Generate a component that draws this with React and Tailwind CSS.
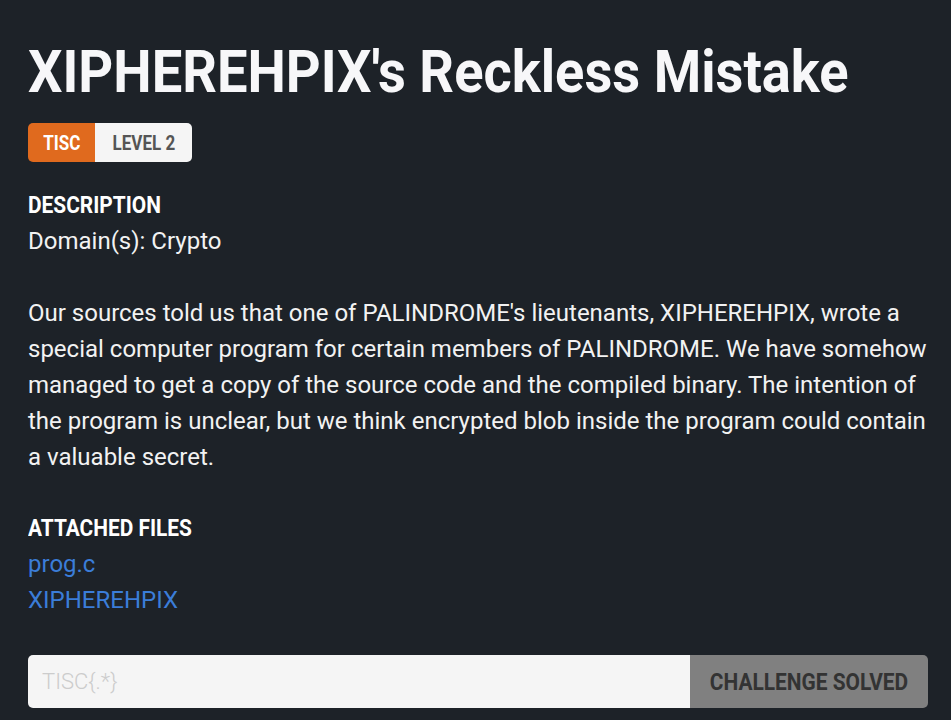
function Label({ children, className = '' }) {
  return <span className={`inline-block whitespace-nowrap ${className}`}>{children}</span>
}

export default function App() {
  return (
    <div className="min-h-[720px] bg-[#1d2228] pl-[28px] pr-[23px] pt-[37px] pb-4 font-['Roboto','Liberation_Sans',sans-serif] text-[#f2f2f2]">
      <h1 className="h-[70px] text-[59px] font-bold leading-[70px] text-[#f7f7f9]">
        <Label className="origin-left scale-x-[0.92]">XIPHEREHPIX's Reckless Mistake</Label>
      </h1>
      <div className="mt-[16px] flex h-[39px] w-fit overflow-hidden rounded-[5px] text-[20px] font-bold">
        <span className="flex w-[67px] items-center justify-center bg-[#e06a1e] text-white">
          <Label className="scale-x-[0.85]">TISC</Label>
        </span>
        <span className="flex w-[97px] items-center justify-center bg-[#f5f5f5] text-[#555]">
          <Label className="scale-x-[0.85]">LEVEL 2</Label>
        </span>
      </div>
      <h2 className="mt-[25px] text-[24px] font-bold leading-[36px] text-white">
        <Label className="origin-left scale-x-[0.87]">DESCRIPTION</Label>
      </h2>
      <p className="text-[24px] leading-[36px]">Domain(s): Crypto</p>
      <p className="mt-[36px] text-[24px] leading-[36px]">
        Our sources told us that one of PALINDROME's lieutenants, XIPHEREHPIX, wrote a special computer program for certain members of PALINDROME. We have somehow managed to get a copy of the source code and the compiled binary. The intention of the program is unclear, but we think encrypted blob inside the program could contain a valuable secret.
      </p>
      <h2 className="mt-[35px] text-[24px] font-bold leading-[36px] text-white">
        <Label className="origin-left scale-x-[0.87]">ATTACHED FILES</Label>
      </h2>
      <div className="flex flex-col text-[24px] leading-[36px] text-[#3b7dd8]">
        <a href="#" className="w-fit">prog.c</a>
        <a href="#" className="w-fit">XIPHEREHPIX</a>
      </div>
      <div className="mt-[37px] flex h-[53px] overflow-hidden rounded-[5px]">
        <input
          placeholder="TISC{.*}"
          className="min-w-0 flex-1 bg-[#f5f5f5] px-[14px] text-[22px] font-light text-[#333] outline-none placeholder:text-[#cccccc]"
        />
        <button className="flex w-[238px] items-center justify-center bg-[#808080] text-[24px] font-bold text-[#333]">
          <Label className="scale-x-[0.87]">CHALLENGE SOLVED</Label>
        </button>
      </div>
    </div>
  )
}
